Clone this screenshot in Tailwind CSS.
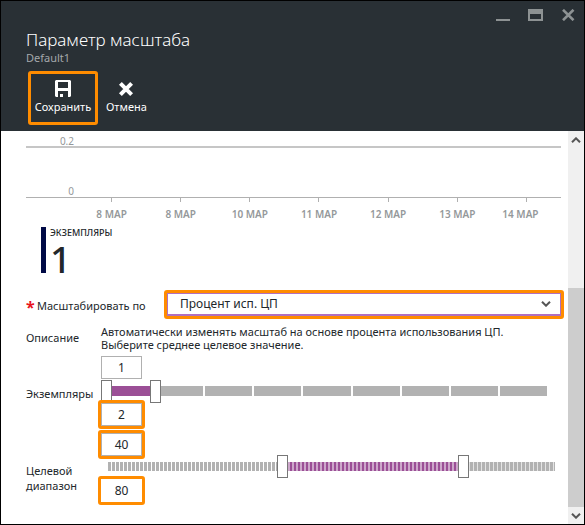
<!DOCTYPE html>
<html lang="ru">
<head>
<meta charset="utf-8">
<meta name="viewport" content="width=device-width, initial-scale=1">
<title>Параметр масштаба</title>
<script src="https://cdn.jsdelivr.net/npm/@tailwindcss/browser@4"></script>
</head>
<body class="bg-white font-['Noto_Sans','Open_Sans',sans-serif] text-[11px] text-[#22272b]">
<div class="flex min-h-screen flex-col border border-black">

  <header class="bg-[#293035] pb-[6px] text-white">
    <div class="flex justify-end gap-[18px] pt-2 pr-[7px]">
      <button type="button" aria-label="Свернуть" class="text-[#8d9293]">
        <svg class="block h-3 w-[14px]" viewBox="0 0 14 12" fill="currentColor"><path d="M0 10h14v2H0z"/></svg>
      </button>
      <button type="button" aria-label="Развернуть" class="text-[#8d9293]">
        <svg class="block h-3 w-[15px]" viewBox="0 0 15 12" fill="currentColor" fill-rule="evenodd"><path d="M0 0h15v12H0zM2 5v5h11V5z"/></svg>
      </button>
      <button type="button" aria-label="Закрыть" class="text-[#8d9293]">
        <svg class="block h-3 w-[16px]" viewBox="0 0 16 12" fill="none" stroke="currentColor" stroke-width="2.6"><path d="M2 .8 12.500 11.200M12.500 .8 2 11.200"/></svg>
      </button>
    </div>
    <h1 class="mt-[7px] pl-[25px] text-[17px] leading-6 font-light">Параметр масштаба</h1>
    <p class="pl-[25px] text-[11px] leading-3 text-[#a4a8ab]">Default1</p>
    <div class="mt-[7px] flex gap-[8px] pl-[27px] text-[11px] leading-4">
      <button type="button" class="flex h-[54px] w-[70px] flex-col items-center gap-[2px] rounded-[3px] border-3 border-[#ff8c00] pt-[6px]">
        <svg class="h-[17px] w-4" viewBox="0 0 16 17" fill="#fff" fill-rule="evenodd"><path d="M1 0h14l1 1v15l-1 1H1l-1-1V1zM3 2v6h10V2zM3 11v6h2v-3h3v3h5v-6z"/></svg>
        <span>Сохранить</span>
      </button>
      <button type="button" class="flex h-[54px] flex-col items-center gap-[2px] pt-[9px]">
        <svg class="h-[17px] w-4" viewBox="0 0 16 17" fill="none" stroke="#fff" stroke-width="4"><path d="m2.400 3.400 11.200 11.200m0-11.200L2.400 14.600"/></svg>
        <span>Отмена</span>
      </button>
    </div>
  </header>

  <div class="flex grow">
    <main class="min-w-0 grow pl-[25px]">
      <section aria-label="График" class="mr-[7px] text-[10px] text-[#94989a]">
        <div class="h-[17px] border-b-2 border-[#c6c6c6]"><span class="block w-[48px] pt-1 text-right leading-3">0.2</span></div>
        <div class="flex h-[50px] items-end border-b border-[#b0b0b0]"><span class="block w-[48px] text-right leading-3">0</span></div>
        <div class="grid grid-cols-7 pl-[51px]">
          <i class="mx-auto h-1 w-px bg-[#b0b0b0]"></i><i class="mx-auto h-1 w-px bg-[#b0b0b0]"></i><i class="mx-auto h-1 w-px bg-[#b0b0b0]"></i><i class="mx-auto h-1 w-px bg-[#b0b0b0]"></i><i class="mx-auto h-1 w-px bg-[#b0b0b0]"></i><i class="mx-auto h-1 w-px bg-[#b0b0b0]"></i><i class="mx-auto h-1 w-px bg-[#b0b0b0]"></i>
        </div>
        <div class="grid grid-cols-7 pt-1 pl-[51px] text-center text-[10px] leading-4 font-semibold">
          <span>8 МАР</span><span>8 МАР</span><span>10 МАР</span><span>11 МАР</span><span>12 МАР</span><span>13 МАР</span><span class="pr-3">14 МАР</span>
        </div>
      </section>

      <section class="mt-[5px] ml-[15px] h-[46px] border-l-[5px] border-[#000a46] pl-[4px]">
        <h2 class="text-[9px] leading-3 font-medium">ЭКЗЕМПЛЯРЫ</h2>
        <p class="text-[37px] leading-[40px] font-medium">1</p>
      </section>

      <form>
        <div class="mt-[17px] mr-1 flex h-[29px] items-center">
          <label for="metric" class="flex w-[138px] items-center gap-1 pt-1"><span class="w-[7px] text-[16px] leading-4 font-bold text-[#e8141c]">*</span>Масштабировать по</label>
          <div class="relative grow rounded-[3px] border-3 border-[#ff8c00]">
            <select id="metric" class="block h-[23px] w-full appearance-none border border-b-2 border-[#b06fc0] bg-white pl-3 text-[12px] leading-4">
              <option>Процент исп. ЦП</option>
            </select>
            <svg class="pointer-events-none absolute top-2 right-[10px] h-[6px] w-[10px]" viewBox="0 0 10 6" fill="none" stroke="#555" stroke-width="2"><path d="m1 .7 4 4 4-4"/></svg>
          </div>
        </div>

        <div class="mt-[6px] flex items-center">
          <span class="w-[75px]">Описание</span>
          <p class="leading-[13px]">Автоматически изменять масштаб на основе процента использования ЦП.<br>Выберите среднее целевое значение.</p>
        </div>

        <div role="group" aria-label="Экземпляры" class="mt-[5px] flex items-end">
          <label for="min-count" class="w-[75px] leading-[18px]">Экземпляры</label>
          <div class="min-w-0 grow pr-[15px]">
            <input id="min-count" value="1" class="block h-[23px] w-[41px] border border-[#b0b0b0] text-center text-[12px]">
            <div class="relative h-[24px]">
              <div class="flex h-full items-center gap-[2px] px-[6px]">
                <i class="h-[10px] grow bg-[#9b4f96]"></i><i class="h-[10px] grow bg-[#b2b2b2]"></i><i class="h-[10px] grow bg-[#b2b2b2]"></i><i class="h-[10px] grow bg-[#b2b2b2]"></i><i class="h-[10px] grow bg-[#b2b2b2]"></i><i class="h-[10px] grow bg-[#b2b2b2]"></i><i class="h-[10px] grow bg-[#b2b2b2]"></i><i class="h-[10px] grow bg-[#b2b2b2]"></i><i class="h-[10px] grow bg-[#b2b2b2]"></i>
              </div>
              <input type="range" aria-label="Минимум экземпляров" min="1" max="10" value="1" class="pointer-events-none absolute inset-0 h-full w-full appearance-none bg-transparent [&::-webkit-slider-thumb]:pointer-events-auto [&::-webkit-slider-thumb]:h-[23px] [&::-webkit-slider-thumb]:w-[11px] [&::-webkit-slider-thumb]:appearance-none [&::-webkit-slider-thumb]:border [&::-webkit-slider-thumb]:border-[#777] [&::-webkit-slider-thumb]:bg-white">
              <input type="range" aria-label="Максимум экземпляров" min="1" max="10" value="2" class="pointer-events-none absolute inset-0 h-full w-full appearance-none bg-transparent [&::-webkit-slider-thumb]:pointer-events-auto [&::-webkit-slider-thumb]:h-[23px] [&::-webkit-slider-thumb]:w-[11px] [&::-webkit-slider-thumb]:appearance-none [&::-webkit-slider-thumb]:border [&::-webkit-slider-thumb]:border-[#777] [&::-webkit-slider-thumb]:bg-white">
            </div>
          </div>
        </div>
        <div class="relative -mt-[3px] ml-[72px] w-[47px] rounded-[3px] border-3 border-[#ff8c00]">
          <input aria-label="Максимум экземпляров" value="2" class="block h-[23px] w-full border border-[#b0b0b0] bg-white text-center text-[12px]">
        </div>

        <div class="mt-px ml-[72px] w-[47px] rounded-[3px] border-3 border-[#ff8c00]">
          <input aria-label="Нижняя граница диапазона" value="40" class="block h-[23px] w-full border border-[#b0b0b0] bg-white text-center text-[12px]">
        </div>
        <div class="flex">
          <label for="max-target" class="w-[75px] pt-1 leading-[15px]">Целевой<br>диапазон</label>
          <div class="min-w-0 grow pr-[9px]">
            <div class="relative -mt-1 h-[23px]">
              <div class="flex h-full items-center pr-1 pl-[7px]">
                <i class="h-[9px] w-[39%] bg-[repeating-linear-gradient(90deg,#b2b2b2_0_3px,#fff_3px_4px)]"></i><i class="h-[9px] w-[41%] bg-[repeating-linear-gradient(90deg,#9b4f96_0_2px,#cda7cb_2px_4px)]"></i><i class="h-[9px] w-[20%] bg-[repeating-linear-gradient(90deg,#b2b2b2_0_3px,#e4e4e4_3px_4px)]"></i>
              </div>
              <input type="range" aria-label="Нижняя граница" min="1" max="100" value="40" class="pointer-events-none absolute inset-0 h-full w-full appearance-none bg-transparent [&::-webkit-slider-thumb]:pointer-events-auto [&::-webkit-slider-thumb]:h-[23px] [&::-webkit-slider-thumb]:w-[11px] [&::-webkit-slider-thumb]:appearance-none [&::-webkit-slider-thumb]:border [&::-webkit-slider-thumb]:border-[#777] [&::-webkit-slider-thumb]:bg-white">
              <input type="range" aria-label="Верхняя граница" min="1" max="100" value="80" class="pointer-events-none absolute inset-0 h-full w-full appearance-none bg-transparent [&::-webkit-slider-thumb]:pointer-events-auto [&::-webkit-slider-thumb]:h-[23px] [&::-webkit-slider-thumb]:w-[11px] [&::-webkit-slider-thumb]:appearance-none [&::-webkit-slider-thumb]:border [&::-webkit-slider-thumb]:border-[#777] [&::-webkit-slider-thumb]:bg-white">
            </div>
            <div class="-mt-[2px] -ml-[3px] w-[47px] rounded-[3px] border-3 border-[#ff8c00]">
              <input id="max-target" value="80" class="block h-[23px] w-full bg-white text-center text-[12px]">
            </div>
          </div>
        </div>
      </form>
    </main>

    <div class="flex w-4 shrink-0 flex-col bg-[#f0f0f0]">
      <button type="button" aria-label="Вверх" class="flex h-[17px] items-center justify-center">
        <svg class="h-[6px] w-[10px]" viewBox="0 0 10 6" fill="none" stroke="#555" stroke-width="2"><path d="m1 5.300 4-4 4 4"/></svg>
      </button>
      <div class="flex grow items-end"><div class="h-[61%] w-full bg-[#cdcdcd]"></div></div>
      <button type="button" aria-label="Вниз" class="flex h-[17px] items-center justify-center">
        <svg class="h-[6px] w-[10px]" viewBox="0 0 10 6" fill="none" stroke="#555" stroke-width="2"><path d="m1 .7 4 4 4-4"/></svg>
      </button>
    </div>
  </div>
</div>
</body>
</html>
